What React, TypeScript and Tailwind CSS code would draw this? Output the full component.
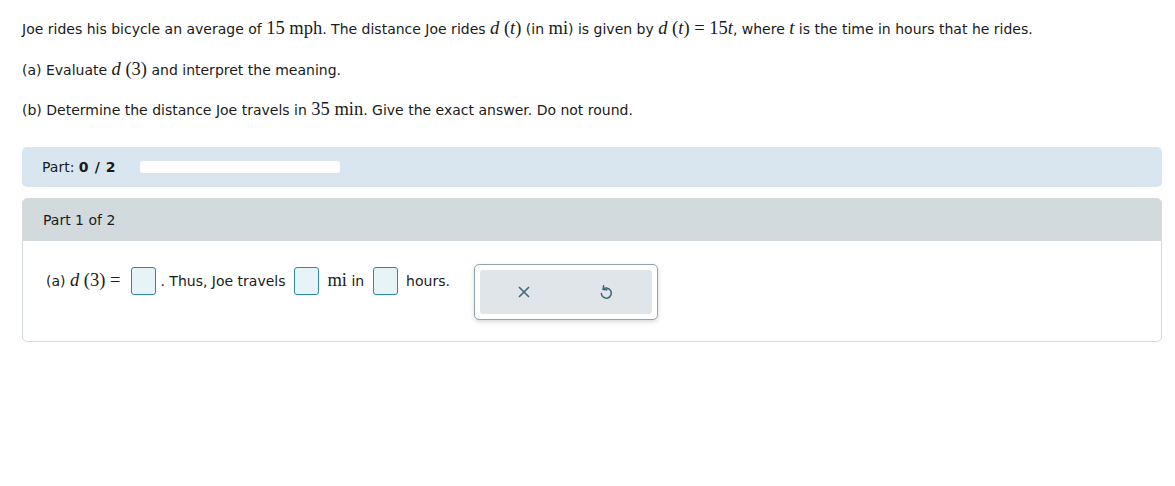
const serif = { fontFamily: '"Liberation Serif", "Times New Roman", serif' };

function M({ children }: { children: React.ReactNode }) {
  return (
    <span className="text-[18.5px]" style={serif}>
      {children}
    </span>
  );
}

function Box({ first }: { first?: boolean }) {
  return (
    <span
      className={
        first
          ? "inline-block w-[25px] h-[28px] ml-[11px] mr-[4px] align-middle rounded-[3px] border border-[#2a8d99] bg-[#e6f3f7]"
          : "inline-block w-[25px] h-[28px] mx-[4px] align-middle rounded-[3px] border border-[#2a8d99] bg-[#e6f3f7]"
      }
    ></span>
  );
}

export default function App() {
  return (
    <div className="bg-white w-[1175px] h-[486px] text-[#1a1a1a] text-[14px]" style={{ fontFamily: '"DejaVu Sans", Verdana, sans-serif' }}>
      <div className="pl-[22px] pr-[13px] pt-[16px]">
        {/* Enunciado */}
        <p className="h-[26px] flex items-center">
          <span>
            Joe rides his bicycle an average of <M>15 mph</M>. The distance Joe rides <M><i>d</i> (<i>t</i>)</M> (in <M>mi</M>) is given by <M><i>d</i> (<i>t</i>) = 15<i>t</i></M>, where <M><i>t</i></M> is the time in hours that he rides.
          </span>
        </p>
        <p className="h-[26px] flex items-center mt-[15px]">
          <span>
            (a) Evaluate <M><i>d</i> (3)</M> and interpret the meaning.
          </span>
        </p>
        <p className="h-[26px] flex items-center mt-[14px]">
          <span>
            (b) Determine the distance Joe travels in <M>35 min</M>. Give the exact answer. Do not round.
          </span>
        </p>

        {/* Barra de progreso */}
        <div className="mt-[24px] h-[40px] rounded-[5px] bg-[#dae6ef] flex items-center pl-[20px]">
          <span>
            Part: <b className="tracking-[0.6px]">0 / 2</b>
          </span>
          <div className="ml-[24px] w-[200px] h-[12px] rounded-[3px] bg-white"></div>
        </div>

        {/* Parte 1 */}
        <div className="mt-[11px] h-[144px] rounded-[5px] border border-[#d3dbde] overflow-hidden">
          <div className="h-[42px] bg-[#d2dadd] flex items-center pl-[20px]">Part 1 of 2</div>
          <div className="flex items-start pl-[23px] pt-[25px]">
            <div className="flex items-center h-[30px]">
              <span>(a)&nbsp;</span>
              <M><i>d</i> (3) =</M>
              <Box first />
              <span>. Thus, Joe travels&nbsp;</span>
              <Box />
              <span>&nbsp;</span>
              <M>mi</M>
              <span>&nbsp;in&nbsp;</span>
              <Box />
              <span>&nbsp;hours.</span>
            </div>
            <div className="ml-[24px] mt-[-2px] w-[184px] h-[56px] rounded-[5px] border border-[#8fa4ae] bg-white shadow-[0_2px_5px_rgba(0,0,0,0.15)] p-[5px]">
              <div className="h-full rounded-[3px] bg-[#dfe5e8] flex items-center justify-around px-[10px]">
                <svg width="14" height="14" viewBox="0 0 14 14" className="ml-[-2px]">
                  <path d="M2 2L12 12M12 2L2 12" stroke="#3d6876" strokeWidth="1.6" />
                </svg>
                <svg width="14" height="16" viewBox="0 0 14 16" className="ml-[10px]">
                  <path d="M4.2 5.2A5 5 0 1 1 2.3 9.5" fill="none" stroke="#3d6876" strokeWidth="1.5" strokeLinecap="round" />
                  <path d="M4.6 1.8L4.2 5.4L7.8 5.8" fill="none" stroke="#3d6876" strokeWidth="1.5" strokeLinecap="round" strokeLinejoin="round" />
                </svg>
              </div>
            </div>
          </div>
        </div>
      </div>
    </div>
  );
}
